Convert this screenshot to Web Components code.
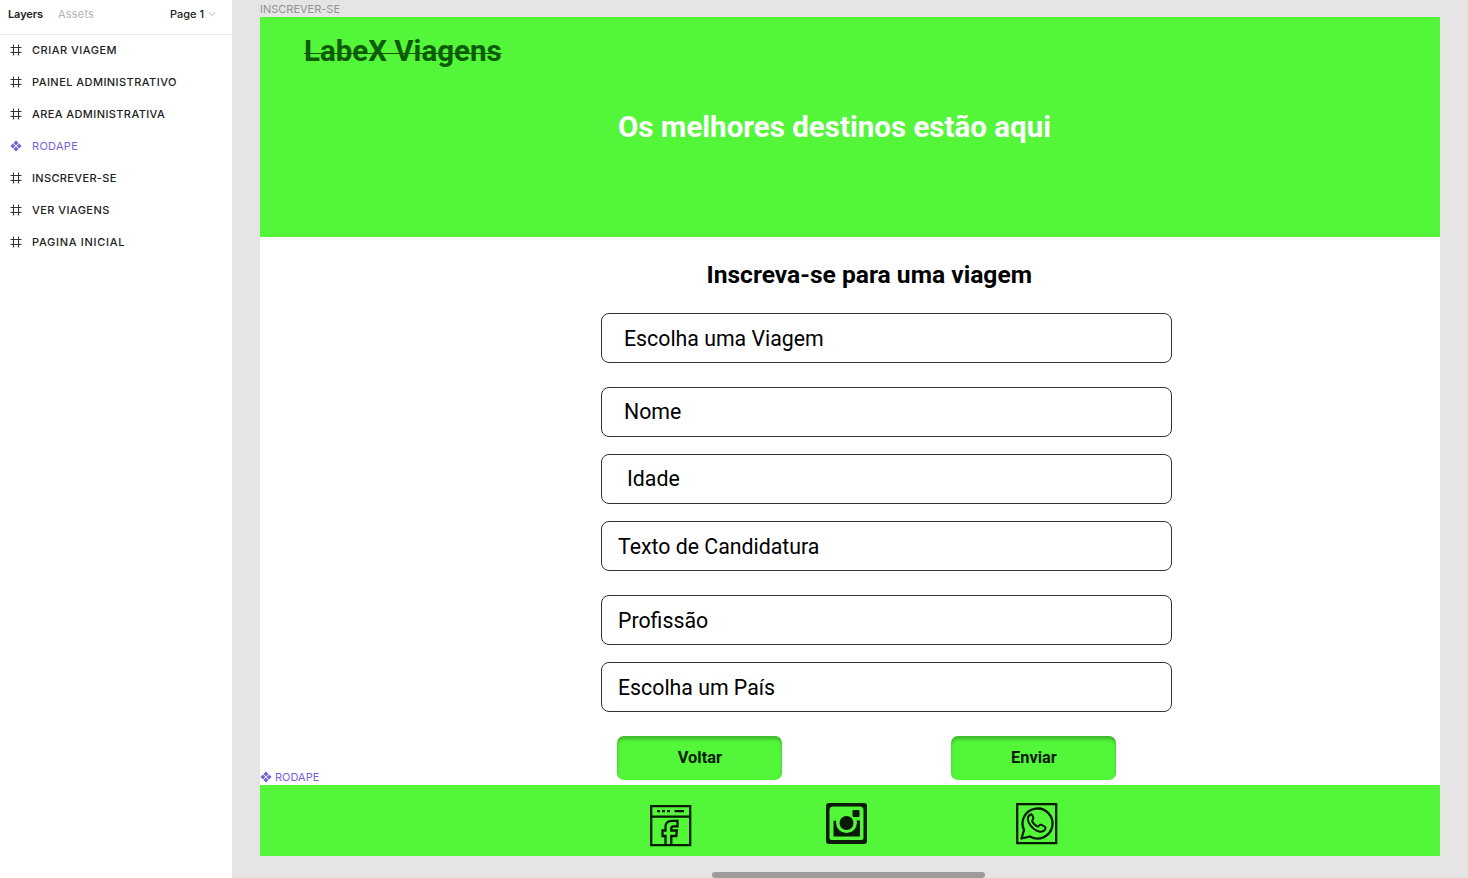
<!DOCTYPE html>
<html lang="pt-BR">
<head>
<meta charset="utf-8">
<title>LabeX Viagens</title>
<style>
html, body { margin: 0; height: 100%; overflow: hidden; background: #e5e5e5; }
body { font-family: Roboto, "Liberation Sans", sans-serif; --green: #54f63a; }
</style>
</head>
<body>
<design-app></design-app>
<script>
const define = (name, html) => customElements.define(name, class extends HTMLElement {
  constructor() {
    super();
    const t = document.createElement('template');
    t.innerHTML = html;
    this.attachShadow({ mode: 'open' }).append(t.content.cloneNode(true));
  }
});

define('frame-icon', `<style>:host{display:block;width:12px;height:12px}svg{display:block}</style>
<svg width="12" height="12" viewBox="0 0 12 12" fill="none" stroke="#333"><path d="M3.5 .5v11M8.5 .5v11M.5 3.5h11M.5 8.5h11"/></svg>`);

define('component-icon', `<style>:host{display:block;width:12px;height:12px}svg{display:block}</style>
<svg width="12" height="12" viewBox="0 0 12 12" fill="#7b61d9"><path d="M6 .4l2.5 2.5L6 5.4 3.5 2.9zM6 6.6l2.5 2.5L6 11.6 3.5 9.1zM2.9 3.5L5.4 6 2.9 8.5.4 6zM9.1 3.5L11.6 6 9.1 8.5 6.6 6z"/></svg>`);

define('layer-row', `<style>
:host{display:flex;align-items:center;height:32px;padding-left:10px;gap:10px;color:#222;font:500 11px/16px Inter,"Liberation Sans",sans-serif;letter-spacing:var(--ls,0);white-space:nowrap}
</style><slot name="icon"></slot><span><slot></slot></span>`);

define('layers-panel', `<style>
:host{display:block;width:232px;background:#fff;font-family:Inter,"Liberation Sans",sans-serif}
header{display:flex;align-items:center;box-sizing:border-box;padding:0 16px 6px 8px;border-bottom:1px solid #e5e5e5;height:35px;font-size:11px;line-height:16px;color:#222}
nav{margin-top:-1px}
.on{font-weight:600;width:50px;letter-spacing:-.1px}.off{color:#b3b3b3;flex:1;letter-spacing:.2px}
.page{font-weight:500;letter-spacing:0;margin-right:4px}
svg{display:block}
layer-row.c{color:#7b61d9;font-weight:400}
</style>
<header><span class="on">Layers</span><span class="off">Assets</span><span class="page">Page 1</span>
<svg width="8" height="6" viewBox="0 0 8 6" fill="none" stroke="#b3b3b3"><path d="M1 1.5l3 3 3-3"/></svg></header>
<nav>
<layer-row style="--ls:.5px"><frame-icon slot="icon"></frame-icon>CRIAR VIAGEM</layer-row>
<layer-row style="--ls:.45px"><frame-icon slot="icon"></frame-icon>PAINEL ADMINISTRATIVO</layer-row>
<layer-row style="--ls:.4px"><frame-icon slot="icon"></frame-icon>AREA ADMINISTRATIVA</layer-row>
<layer-row class="c" style="--ls:.3px"><component-icon slot="icon"></component-icon>RODAPE</layer-row>
<layer-row style="--ls:.34px"><frame-icon slot="icon"></frame-icon>INSCREVER-SE</layer-row>
<layer-row style="--ls:.43px"><frame-icon slot="icon"></frame-icon>VER VIAGENS</layer-row>
<layer-row style="--ls:.7px"><frame-icon slot="icon"></frame-icon>PAGINA INICIAL</layer-row>
</nav>`);

define('hero-banner', `<style>
:host{display:block;height:220px;background:var(--green);box-sizing:border-box;padding-top:16px}
h1{margin:0 0 0 44px;font-size:29.5px;line-height:36px;color:#0b5c04;font-weight:700;width:max-content;text-decoration:underline;text-decoration-thickness:1px;text-underline-offset:-8px;text-decoration-skip-ink:none}
p{margin:41px 0 0 358px;font-size:29.5px;line-height:35px;font-weight:700;color:#fff}
</style><h1>LabeX Viagens</h1><p>Os melhores destinos estão aqui</p>`);

define('form-field', `<style>
:host{display:flex;align-items:center;box-sizing:border-box;width:570.5px;height:50px;border:1px solid #333;border-radius:8px;padding-left:var(--pad,16px);padding-bottom:var(--lift,0);font-size:21.3px;line-height:25px;color:#000}
</style><slot></slot>`);

define('form-button', `<style>
:host{display:flex;align-items:center;justify-content:center;box-sizing:border-box;padding-bottom:1.5px;width:165px;height:44px;border-radius:7px;background:var(--green);box-shadow:inset 0 3.3px 3.3px rgba(0,0,0,.25);font-weight:700;font-size:16.4px;color:#071b05}
</style><slot></slot>`);

define('trip-form', `<style>
:host{display:flex;flex-direction:column;flex:1;padding-left:341px;background:#fff}
h2{margin:23px 0 23px 105.5px;font-size:24.6px;line-height:30px;font-weight:700;color:#000}
.near{margin-top:17px}.far{margin-top:24px}
.actions{display:flex;gap:169px;margin:24px 0 0 16.4px}
</style>
<h2>Inscreva-se para uma viagem</h2>
<form-field style="--pad:22px">Escolha uma Viagem</form-field>
<form-field class="far" style="--pad:22px;--lift:2px">Nome</form-field>
<form-field class="near" style="--pad:25px;--lift:2px">Idade</form-field>
<form-field class="near">Texto de Candidatura</form-field>
<form-field class="far">Profissão</form-field>
<form-field class="near">Escolha um País</form-field>
<div class="actions"><form-button>Voltar</form-button><form-button>Enviar</form-button></div>`);

define('page-footer', `<style>
:host{display:flex;height:71px;box-sizing:border-box;background:var(--green);padding:17px 0 0 389px;align-items:flex-start}
svg{display:block}
.fb{margin:2px 133px 0 0}.ig{margin-right:147px}
</style>
<svg class="fb" width="43" height="43" viewBox="0 0 43 43" fill="none" stroke="#071b05" stroke-width="2.3"><path d="M2.2 2.2h39v39h-39zM2.2 12.7h39"/><path d="M8 7.2h3M13 7.2h3M18 7.2h3M25.5 7.2h9.5"/><path d="M16.5 41v-9h-3v-5.500h3v-3.500c0-4 2.500-6.200 6.500-6.200h5.500v5.500h-4c-1.500 0-2.200.7-2.200 2v2.200h5.500l-.5 5.500h-5V41"/></svg>
<svg class="ig" width="43" height="43" viewBox="0 0 43 43"><rect x="1" y="1" width="41" height="41" rx="3" fill="#071b05"/><path d="M8 4.500h27a3.500 3.500 0 0 1 3.500 3.500v28a2 2 0 0 1-2 2h-30a2 2 0 0 1-2-2V8A3.500 3.500 0 0 1 8 4.500z" fill="#54f63a"/><path d="M8.500 18.500H35V34.500H8.500z" fill="#071b05"/><circle cx="21.500" cy="20.500" r="10.500" fill="#54f63a"/><path d="M8 10h22v8.500H8z" fill="#54f63a"/><circle cx="21.500" cy="21" r="7" fill="#071b05"/><rect x="27.500" y="8" width="7" height="7" rx="1.200" fill="#071b05"/></svg>
<svg width="43" height="43" viewBox="0 0 43 43" fill="none" stroke="#071b05" stroke-width="2.300"><path d="M2.200 2.200h39v39h-39z"/><path d="M6.500 36.500l2.500-8.500A15 15 0 1 1 15 34.500z" stroke-linejoin="round"/><path d="M15.500 12.500c-3 1.500-3.500 4.500-1.500 8.500 2.500 4.500 6 7.500 10 8.500 3 .8 6-.5 6.500-3.500.2-1-.5-1.300-4.500-3.300-1-.4-1.300 0-2.500 1.500-.5.500-1 .4-2-.2-2-1.100-3.300-2.500-4.300-4.500-.4-.8 0-1.200.8-2.200.5-.7.5-1.300.2-2-1.200-3-1.500-3.300-2.700-2.800z" stroke-width="2"/></svg>`);

define('design-canvas', `<style>
:host{display:flex;flex-direction:column;flex:1;background:#e5e5e5;padding-left:28px;font-family:Roboto,"Liberation Sans",sans-serif}
.label{height:17px;font:400 11px/18px Inter,"Liberation Sans",sans-serif;color:#939393}
.frame{position:relative;display:flex;flex-direction:column;width:1180px;height:839px;background:#fff}
.tag{position:absolute;left:0;top:752px;display:flex;align-items:center;gap:3px;font:400 11px/16px Inter,"Liberation Sans",sans-serif;color:#7b61d9}
.scroll{width:273px;height:6px;border-radius:3px;background:#9c9c9c;margin:16px 0 0 452px}
</style>
<div class="label">INSCREVER-SE</div>
<div class="frame"><hero-banner></hero-banner><trip-form></trip-form><page-footer></page-footer>
<div class="tag"><component-icon></component-icon><span>RODAPE</span></div></div>
<div class="scroll"></div>`);

define('design-app', `<style>:host{display:flex;width:100vw;height:100vh}</style><layers-panel></layers-panel><design-canvas></design-canvas>`);
</script>
</body>
</html>
